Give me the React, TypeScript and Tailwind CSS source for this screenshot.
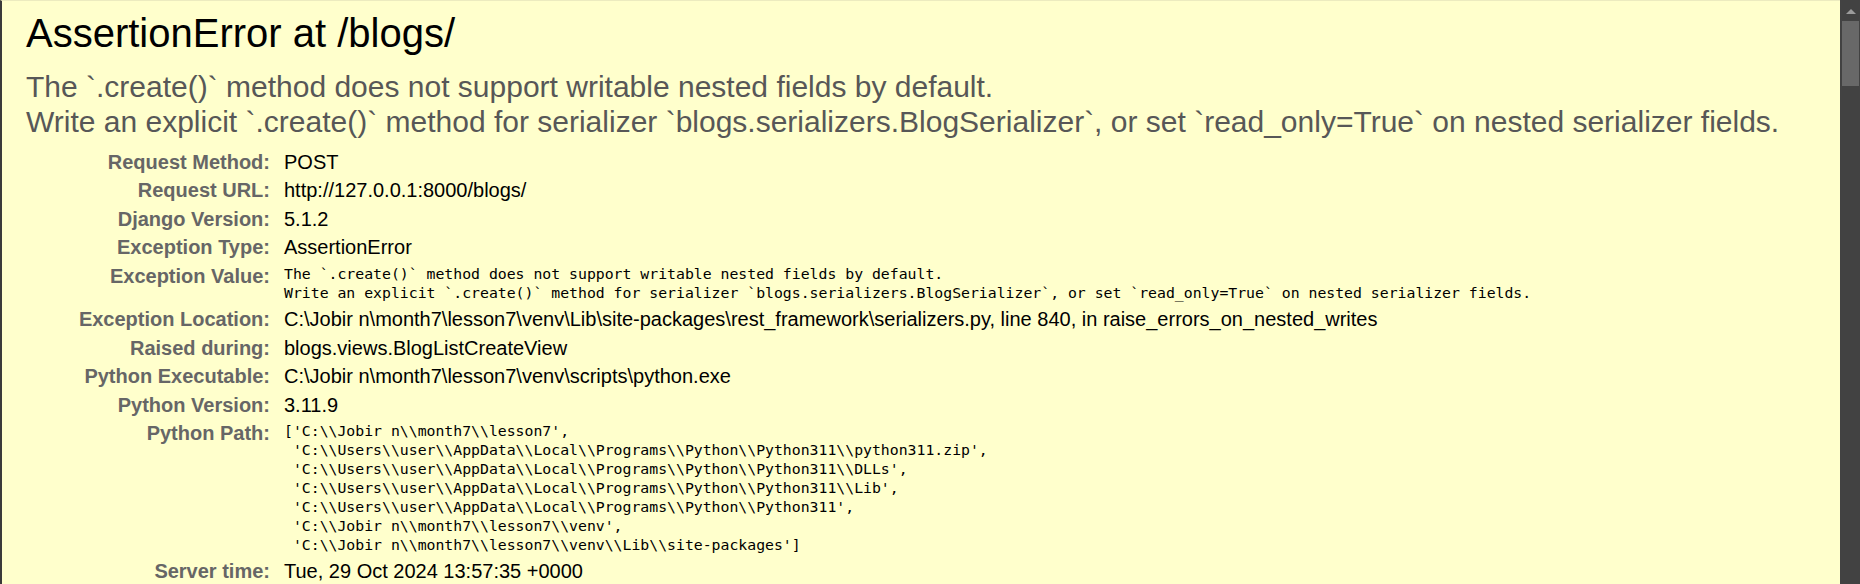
import React from "react";

const sans = { fontFamily: '"Liberation Sans", Arial, sans-serif' };

type Row = { label: string; value?: string; mono?: string[] };

const rows: Row[] = [
  { label: "Request Method:", value: "POST" },
  { label: "Request URL:", value: "http://127.0.0.1:8000/blogs/" },
  { label: "Django Version:", value: "5.1.2" },
  { label: "Exception Type:", value: "AssertionError" },
  {
    label: "Exception Value:",
    mono: [
      "The `.create()` method does not support writable nested fields by default.",
      "Write an explicit `.create()` method for serializer `blogs.serializers.BlogSerializer`, or set `read_only=True` on nested serializer fields.",
    ],
  },
  {
    label: "Exception Location:",
    value:
      "C:\\Jobir n\\month7\\lesson7\\venv\\Lib\\site-packages\\rest_framework\\serializers.py, line 840, in raise_errors_on_nested_writes",
  },
  { label: "Raised during:", value: "blogs.views.BlogListCreateView" },
  { label: "Python Executable:", value: "C:\\Jobir n\\month7\\lesson7\\venv\\scripts\\python.exe" },
  { label: "Python Version:", value: "3.11.9" },
  {
    label: "Python Path:",
    mono: [
      "['C:\\\\Jobir n\\\\month7\\\\lesson7',",
      " 'C:\\\\Users\\\\user\\\\AppData\\\\Local\\\\Programs\\\\Python\\\\Python311\\\\python311.zip',",
      " 'C:\\\\Users\\\\user\\\\AppData\\\\Local\\\\Programs\\\\Python\\\\Python311\\\\DLLs',",
      " 'C:\\\\Users\\\\user\\\\AppData\\\\Local\\\\Programs\\\\Python\\\\Python311\\\\Lib',",
      " 'C:\\\\Users\\\\user\\\\AppData\\\\Local\\\\Programs\\\\Python\\\\Python311',",
      " 'C:\\\\Jobir n\\\\month7\\\\lesson7\\\\venv',",
      " 'C:\\\\Jobir n\\\\month7\\\\lesson7\\\\venv\\\\Lib\\\\site-packages']",
    ],
  },
  { label: "Server time:", value: "Tue, 29 Oct 2024 13:57:35 +0000" },
];

export default function App() {
  return (
    <div className="flex h-[584px] w-[1860px] overflow-hidden bg-[#ffffcc]" style={sans}>
      <div className="flex-1 border-l-2 border-l-[#3a3a3a] border-t border-t-[#ecebbf]">
        <div className="pl-[24px] pt-[10px]">
          <h1 className="text-[40px] leading-[45px] font-normal text-black">AssertionError at /blogs/</h1>
          <div className="mt-[13px] text-[30px] leading-[35px] text-[#575757] whitespace-pre">
            <div>The `.create()` method does not support writable nested fields by default.</div>
            <div>
              Write an explicit `.create()` method for serializer `blogs.serializers.BlogSerializer`, or set
              `read_only=True` on nested serializer fields.
            </div>
          </div>
          <div className="mt-[9px] ml-[6px] grid grid-cols-[238px_1fr] gap-x-[14px]">
            {rows.map((r) => (
              <React.Fragment key={r.label}>
                <div className="py-[3px] text-right text-[20px] leading-[22.4px] font-bold text-[#666666] whitespace-nowrap">
                  {r.label}
                </div>
                <div className="py-[3px] text-[20px] leading-[22.4px] text-black">
                  {r.mono ? (
                    <div
                      className="text-[14.8px] leading-[18.9px] whitespace-pre text-black"
                      style={{ fontFamily: '"DejaVu Sans Mono", "Liberation Mono", monospace' }}
                    >
                      {r.mono.map((l, i) => (
                        <div key={i}>{l}</div>
                      ))}
                    </div>
                  ) : (
                    <div className="whitespace-nowrap">{r.value}</div>
                  )}
                </div>
              </React.Fragment>
            ))}
          </div>
        </div>
      </div>
      <div className="flex w-[20px] flex-col bg-[#424242] pt-[9px]">
        <div className="ml-[6px] h-0 w-0 border-x-[5px] border-b-[5px] border-x-transparent border-b-[#9c9c9c]" />
        <div className="ml-[2px] mt-[7px] h-[65px] w-[17px] bg-[#686868]" />
      </div>
    </div>
  );
}
